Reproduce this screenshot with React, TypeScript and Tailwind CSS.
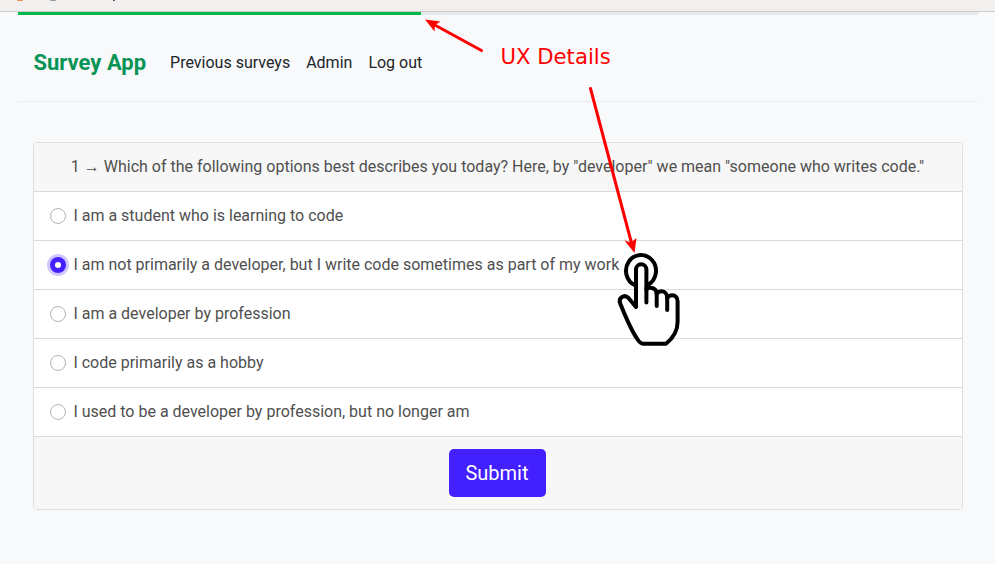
const options = [
  'I am a student who is learning to code',
  'I am not primarily a developer, but I write code sometimes as part of my work',
  'I am a developer by profession',
  'I code primarily as a hobby',
  'I used to be a developer by profession, but no longer am',
];

function Radio({ checked }: { checked: boolean }) {
  return checked ? (
    <span className="flex size-4 shrink-0 items-center justify-center rounded-full bg-[#4320ff] ring-3 ring-[#cfc7ff]">
      <span className="size-1.5 rounded-full bg-white" />
    </span>
  ) : (
    <span className="size-4 shrink-0 rounded-full border border-[#adb5bd] bg-white" />
  );
}

function Annotations() {
  return (
    <svg className="pointer-events-none absolute inset-0" width="995" height="564" viewBox="0 0 995 564" fill="none">
      <g stroke="#f00" strokeWidth="3" strokeLinecap="round">
        <path d="M481.500 50.500 433 24" />
        <path d="M590.500 88.500 631.500 243" />
      </g>
      <g fill="#f00">
        <path d="M425 19.500 440.500 21.500 435 25 434.500 31.500Z" />
        <path d="M634.500 253 624.500 240.500 631 242.500 636.500 238Z" />
      </g>
      <g stroke="#000" strokeWidth="4" strokeLinecap="round" strokeLinejoin="round">
        <path d="M635 285.300A15 15.800 0 1 1 648.500 284.500" />
        <path
          fill="#fff"
          d="M636 307V269.500a5.200 5.200 0 0 1 10.400 0V289.500Q648 287.500 650.500 287.700C654 288 656.700 290 656.700 294Q658.500 291.200 661.800 291.300C665 291.400 667.200 294 667.200 298Q669 295.300 672 295.300C675.500 295.300 677.600 298 677.600 301.500V322C677.600 331 672.500 338.500 666 343.800H643C639.500 343.800 637.500 339 635 335.500C630 327 624 313 620.200 303.500C618 298.500 624 293.500 628.500 298Z"
        />
        <path d="M646.400 288V302.500M656.700 293V306M667.200 298V310" />
      </g>
    </svg>
  );
}

export default function App() {
  return (
    <div className="relative h-[564px] w-[995px] overflow-hidden bg-[#f8f9fb] font-['Roboto',sans-serif] text-base text-[#4f4f4f]">
      <div className="flex h-3 items-start overflow-hidden border-b border-[#cbcbcb] bg-[#f1f0ee] pl-[17px]">
        <span className="h-px w-1.5 rounded-b bg-[#f58b52]" />
        <span className="ml-[27px] h-px w-1.5 rounded-b bg-[#999]" />
        <span className="ml-[57px] h-px w-0.5 bg-[#655573]" />
      </div>
      <div className="ml-[18px] w-[960px]">
        <div className="h-[3px] bg-[#e6eaee]">
          <div className="h-full w-[403px] bg-[#00b74a]" />
        </div>
        <nav className="flex h-[87px] items-center border-b border-[#e9ebed] pr-4 pb-px pl-[15.500px] pt-[11px] text-[#212529]">
          <span className="mr-6 text-[22px] leading-8 font-bold text-[#079455]">Survey App</span>
          <div className="flex gap-4">
            <span>Previous surveys</span>
            <span>Admin</span>
            <span>Log out</span>
          </div>
        </nav>
        <main className="mt-10 ml-[15px] w-[930px] overflow-hidden rounded border border-[#dedfe0] bg-white">
          <div className="flex h-[49px] items-center justify-center border-b border-[#dadbdc] bg-[#f7f7f7] pr-px pb-px">
            <p className="whitespace-pre">1 → Which of the following options best describes you today? Here, by "developer" we mean "someone who writes code."</p>
          </div>
          {options.map((label, i) => (
            <div key={label} className="flex h-[49px] items-center gap-[7.400px] border-b border-[#dadbdc] px-4">
              <Radio checked={i === 1} />
              <span>{label}</span>
            </div>
          ))}
          <div className="flex h-[72px] items-center justify-center bg-[#f7f7f7] pr-[2px]">
            <button className="h-12 w-[97px] rounded-[5px] bg-[#4320ff] text-xl text-white">Submit</button>
          </div>
        </main>
      </div>
      <span className="absolute top-[43px] left-[500.500px] font-['DejaVu_Sans',sans-serif] text-[21.200px] leading-7 whitespace-nowrap text-[#f00]">UX Details</span>
      <Annotations />
    </div>
  );
}
